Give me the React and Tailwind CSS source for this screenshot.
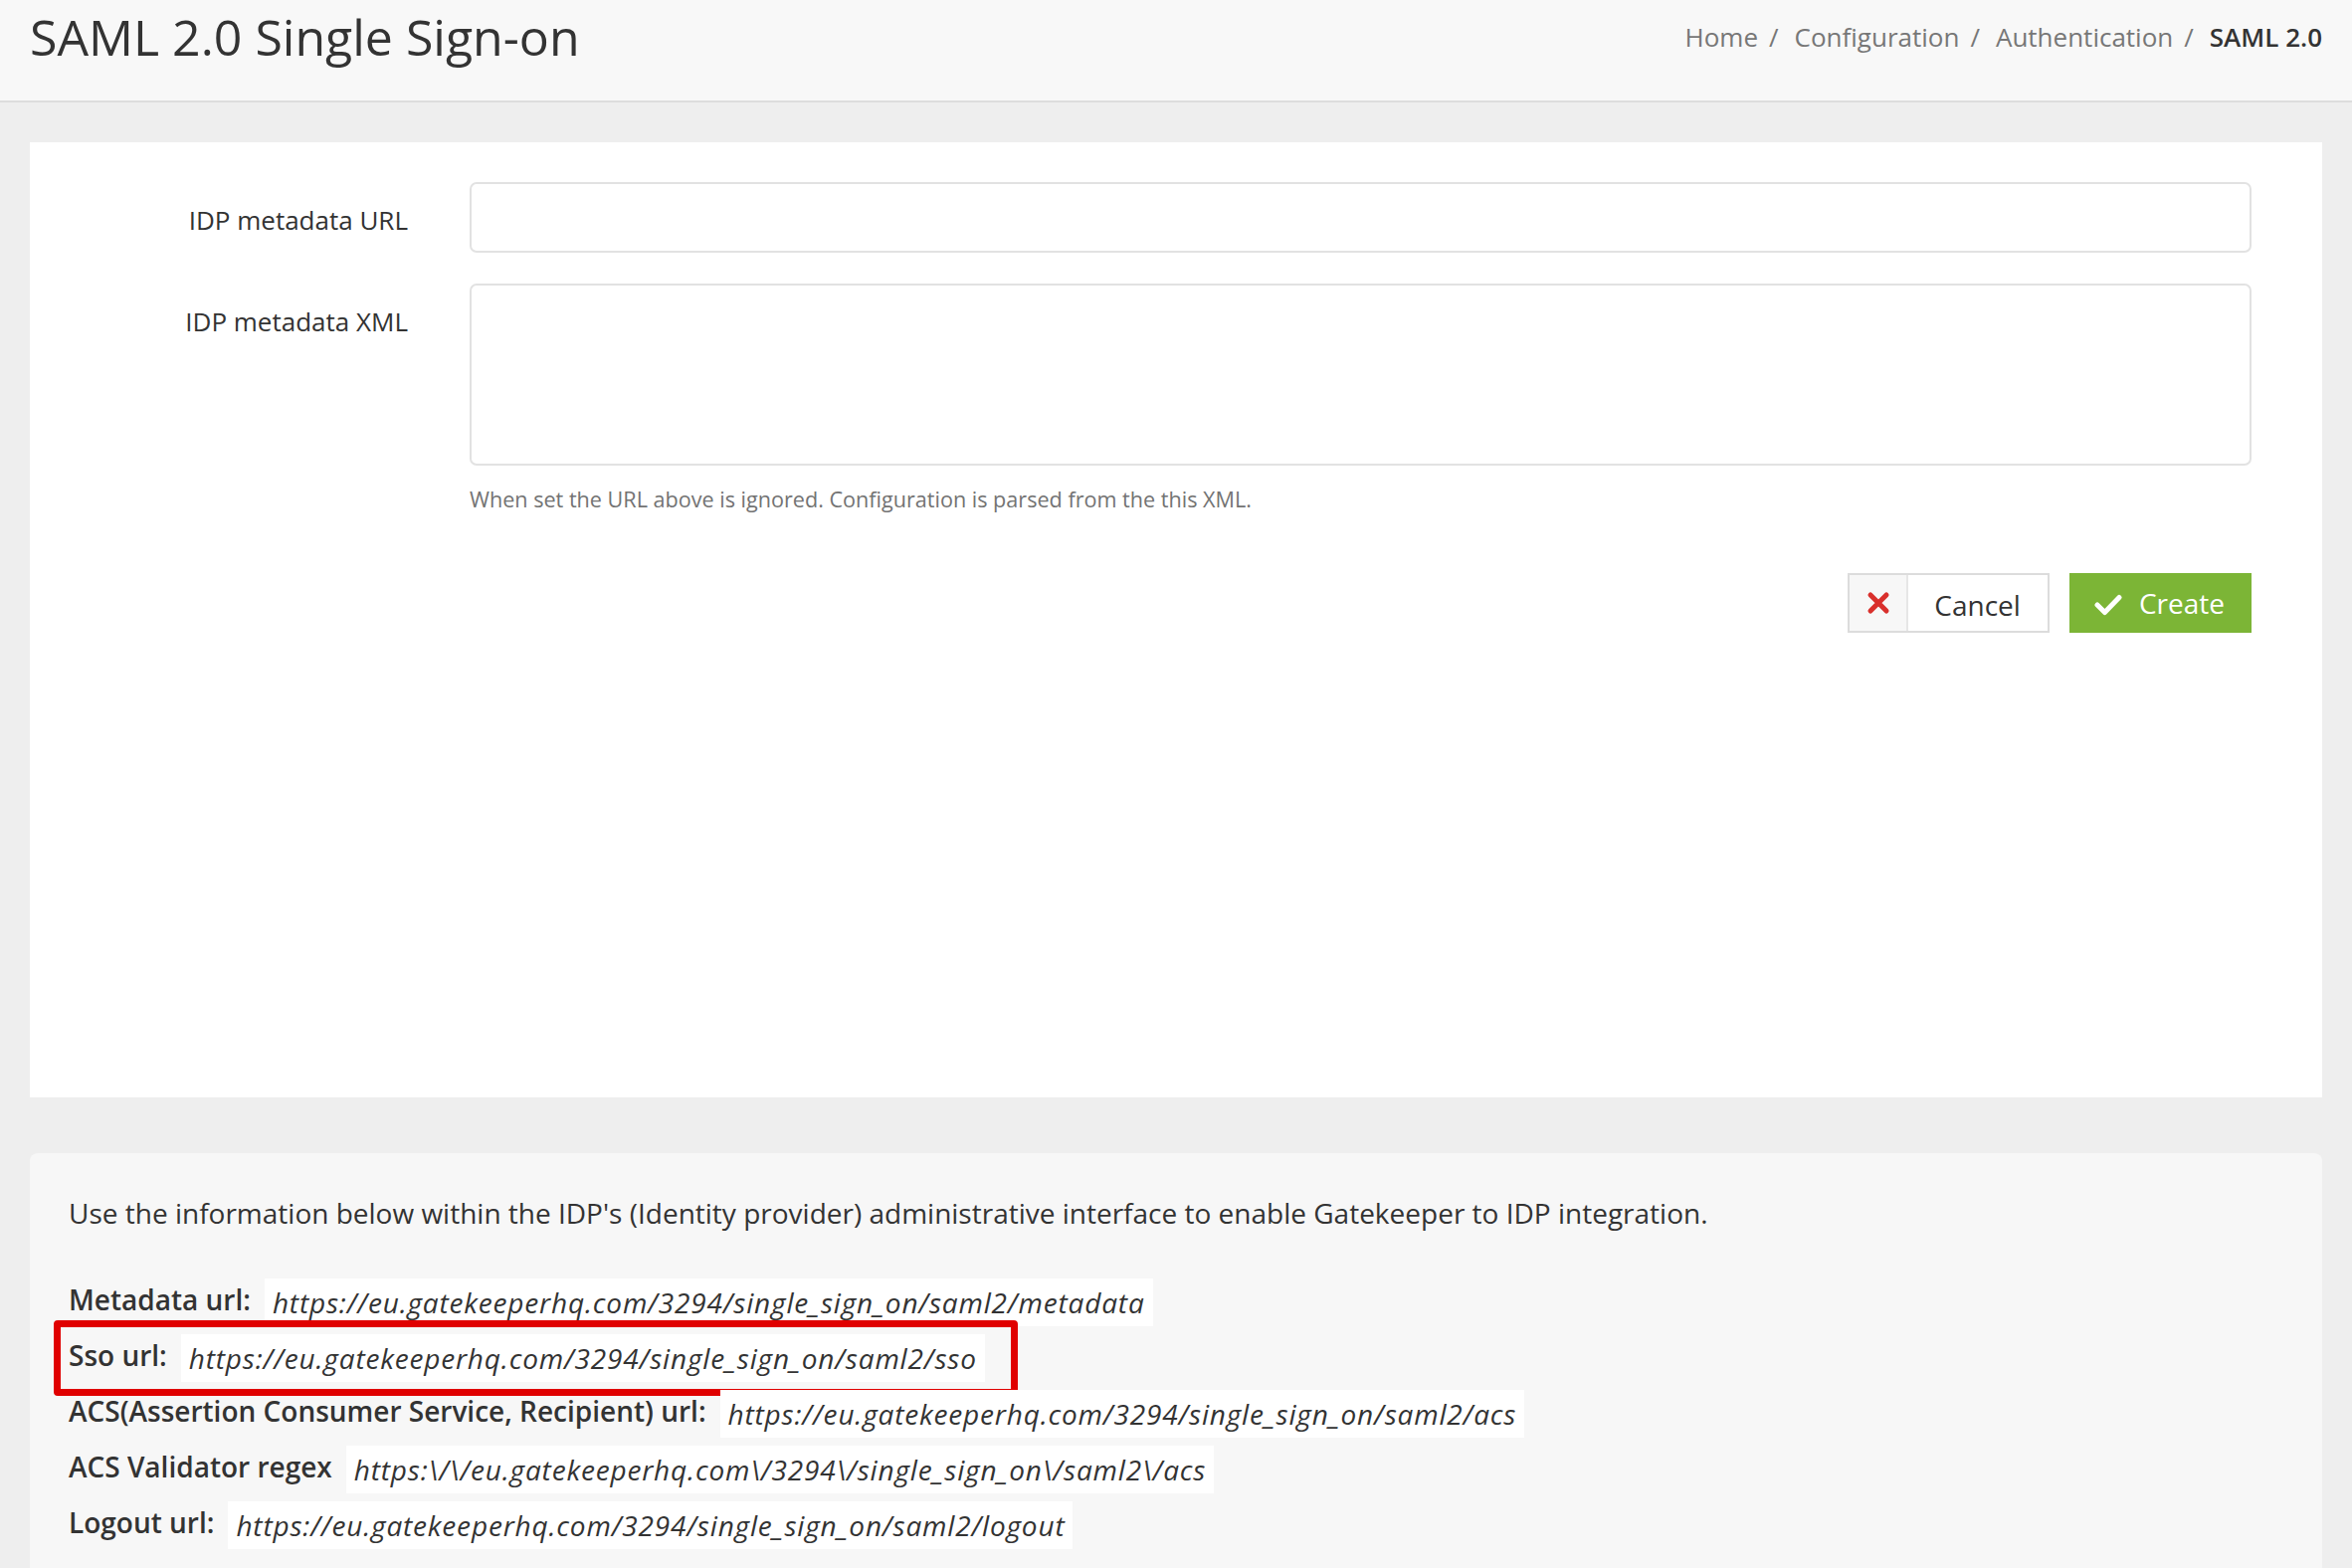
import { useState } from "react";

const ssoRows = [
  { label: "Metadata url:", value: "https://eu.gatekeeperhq.com/3294/single_sign_on/saml2/metadata" },
  { label: "Sso url:", value: "https://eu.gatekeeperhq.com/3294/single_sign_on/saml2/sso", highlight: true },
  { label: "ACS(Assertion Consumer Service, Recipient) url:", value: "https://eu.gatekeeperhq.com/3294/single_sign_on/saml2/acs" },
  { label: "ACS Validator regex", value: "https:\\/\\/eu.gatekeeperhq.com\\/3294\\/single_sign_on\\/saml2\\/acs" },
  { label: "Logout url:", value: "https://eu.gatekeeperhq.com/3294/single_sign_on/saml2/logout" },
];

function Crumb({ children, last }) {
  return (
    <>
      <span className={last ? "font-semibold text-[#333]" : "text-[#777]"}>{children}</span>
      {!last && <span className="ml-[11px] mr-[16px] text-[#777]">/</span>}
    </>
  );
}

export default function App() {
  const [url, setUrl] = useState("");
  const [xml, setXml] = useState("");

  return (
    <div className="min-h-screen bg-[#eeeeee] font-['Open_Sans',sans-serif] text-[#333]">
      {/* ===== HEADER ===== */}
      <div className="flex h-[103px] items-start justify-between border-b-2 border-[#dddddd] bg-[#f8f8f8] px-[30px]">
        <h1 className="pt-[10px] text-[50px] font-normal leading-[55px] text-[#333]">
          SAML 2.0 Single Sign-on
        </h1>
        <div className="flex pt-[19px] text-[26px] leading-[37px]">
          <Crumb>Home</Crumb>
          <Crumb>Configuration</Crumb>
          <Crumb>Authentication</Crumb>
          <Crumb last>SAML 2.0</Crumb>
        </div>
      </div>

      {/* ===== FORM PANEL ===== */}
      <div className="mx-[30px] mt-[40px] h-[960px] bg-white pr-[71px] pt-[40px]">
        <div className="flex">
          <label className="w-[380px] shrink-0 pt-[20px] text-right text-[26px] leading-[37px] text-[#333]">
            IDP metadata URL
          </label>
          <div className="ml-[62px] flex-1">
            <input
              value={url}
              onChange={(e) => setUrl(e.target.value)}
              className="block h-[71px] w-full rounded-[7px] border-2 border-[#e2e2e2] bg-white px-[16px] text-[24px] outline-none"
            />
          </div>
        </div>

        <div className="mt-[31px] flex">
          <label className="w-[380px] shrink-0 pt-[20px] text-right text-[26px] leading-[37px] text-[#333]">
            IDP metadata XML
          </label>
          <div className="ml-[62px] flex-1">
            <textarea
              value={xml}
              onChange={(e) => setXml(e.target.value)}
              className="block h-[183px] w-full resize-none rounded-[7px] border-2 border-[#e2e2e2] bg-white px-[16px] py-[12px] text-[24px] outline-none"
            />
            <p className="mt-[18px] text-[21.6px] leading-[31px] text-[#737373]">
              When set the URL above is ignored. Configuration is parsed from the this XML.
            </p>

            {/* buttons */}
            <div className="mt-[59px] flex justify-end gap-[20px]">
              <button className="flex h-[60px] items-stretch border-2 border-[#dcdcdc] bg-white">
                <span className="flex w-[59px] items-center justify-center border-r-2 border-[#e6e6e6] bg-[#f7f7f7]">
                  <svg width="24" height="24" viewBox="0 0 24 24">
                    <path d="M4 4 L20 20 M20 4 L4 20" stroke="#d9302c" strokeWidth="5" strokeLinecap="round" fill="none" />
                  </svg>
                </span>
                <span className="flex items-center pl-[26px] pr-[27px] pt-[4px] text-[28px] text-[#333]">Cancel</span>
              </button>
              <button className="flex h-[60px] items-center bg-[#7cb536] pl-[25px] pr-[27px] text-[28px] text-white">
                <svg width="28" height="22" viewBox="0 0 28 22" className="mr-[17px] mt-[4px]">
                  <path d="M3 11 L10.5 18.5 L25 3.5" stroke="white" strokeWidth="5" strokeLinecap="round" strokeLinejoin="round" fill="none" />
                </svg>
                Create
              </button>
            </div>
          </div>
        </div>
      </div>

      {/* ===== SSO INFO PANEL ===== */}
      <div className="mx-[30px] mt-[56px] rounded-[8px] bg-[#f7f7f7] pb-[40px] pl-[39px] pt-[40px]">
        <p className="text-[28px] leading-[40px] text-[#333]">
          Use the information below within the IDP's (Identity provider) administrative interface to enable Gatekeeper to IDP integration.
        </p>

        <div className="mt-[46px] flex flex-col gap-[8px]">
          {ssoRows.map((row) => (
            <div key={row.label} className="relative flex w-fit items-center gap-[14px]">
              <span className="pb-[6px] text-[28px] font-semibold leading-[40px] text-[#333]">{row.label}</span>
              <span className="bg-white px-[8px] py-[4px] text-[28px] italic leading-[40px] tracking-[0.82px] text-[#333]">
                {row.value}
              </span>
              {row.highlight && (
                <div className="pointer-events-none absolute -bottom-[14px] -left-[15px] -right-[33px] -top-[14px] rounded-[4px] border-[7px] border-[#e00000]" />
              )}
            </div>
          ))}
        </div>
      </div>
    </div>
  );
}
